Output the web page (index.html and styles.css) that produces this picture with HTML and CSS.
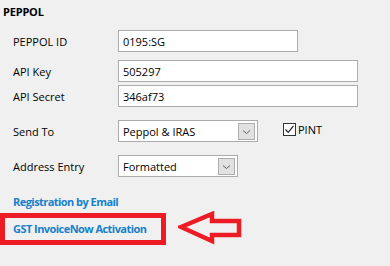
FILE: index.html
```html
<!DOCTYPE html>
<html lang="en">
<head>
    <meta charset="UTF-8">
    <title>PEPPOL Settings</title>
    <link rel="stylesheet" href="styles.css">
</head>
<body>
    <div class="panel">
        <h2 class="title">PEPPOL</h2>

        <div class="form">
            <div class="row row-id">
                <span class="label">PEPPOL ID</span>
                <div class="field field-short">0195:SG</div>
            </div>
            <div class="row row-key">
                <span class="label">API Key</span>
                <div class="field field-long">505297</div>
            </div>
            <div class="row row-secret">
                <span class="label">API Secret</span>
                <div class="field field-long">346af73</div>
            </div>

            <div class="row row-send">
                <span class="label">Send To</span>
                <div class="select select-send">
                    <span>Peppol &amp; IRAS</span>
                    <span class="drop">
                        <svg width="9" height="6" viewBox="0 0 9 6"><path d="M1 1.5 L4.5 4.5 L8 1.5" fill="none" stroke="#606060" stroke-width="1"/></svg>
                    </span>
                </div>
                <label class="check">
                    <span class="box">
                        <svg width="11" height="11" viewBox="0 0 11 11"><path d="M1.5 5.5 L4.2 8.3 L9.5 1.8" fill="none" stroke="#222" stroke-width="1.2"/></svg>
                    </span>
                    PINT
                </label>
            </div>
            <div class="row row-address">
                <span class="label">Address Entry</span>
                <div class="select select-address">
                    <span>Formatted</span>
                    <span class="drop">
                        <svg width="9" height="6" viewBox="0 0 9 6"><path d="M1 1.5 L4.5 4.5 L8 1.5" fill="none" stroke="#606060" stroke-width="1"/></svg>
                    </span>
                </div>
            </div>
        </div>

        <div class="links">
            <a class="link link-reg" href="#">Registration by Email</a>
            <div class="highlight">
                <a class="link" href="#">GST InvoiceNow Activation</a>
            </div>
        </div>

        <!-- annotation arrow pointing at the highlighted link -->
        <svg class="arrow" width="70" height="40" viewBox="0 0 70 40">
            <polygon points="3,16 34,3 34,10 61,10 61,24 34,24 34,30" fill="none" stroke="#ed1c24" stroke-width="4.5" stroke-linejoin="miter"/>
        </svg>
    </div>
</body>
</html>
```

FILE: styles.css
```css
body {
    margin: 0;
    background-color: #f0f0f0;
    font-family: "Open Sans", "Noto Sans", sans-serif;
    font-size: 11px;
    color: #000;
}

.panel {
    position: relative;
    width: 390px;
    height: 266px;
    padding-top: 4px;
    box-sizing: border-box;
}

.title {
    margin: 0 0 0 3px;
    font-size: 11px;
    font-weight: bold;
    line-height: 16px;
    letter-spacing: -0.2px;
}

.form {
    margin-top: 10px;
}

.row {
    display: flex;
    align-items: center;
}

.row-key {
    margin-top: 8px;
}

.row-secret {
    margin-top: 3px;
}

.row-send {
    margin-top: 13px;
}

.row-address {
    margin-top: 13px;
}

.label {
    width: 105px;
    padding-left: 13px;
    white-space: nowrap;
}

.field {
    height: 22px;
    box-sizing: border-box;
    border: 1px solid #ababab;
    background: #fff;
    padding-left: 4px;
    display: flex;
    align-items: center;
    white-space: nowrap;
}

.field-short {
    width: 180px;
}

.field-long {
    width: 240px;
}

.select {
    height: 22px;
    box-sizing: border-box;
    border: 1px solid #ababab;
    background: #fff;
    padding: 0 2px 0 4px;
    display: flex;
    align-items: center;
    justify-content: space-between;
    white-space: nowrap;
}

.select-send {
    width: 140px;
}

.select-address {
    width: 120px;
}

.drop {
    width: 17px;
    height: 17px;
    box-sizing: border-box;
    border: 1px solid #adadad;
    background: #e1e1e1;
    display: flex;
    align-items: center;
    justify-content: center;
    margin-top: 1px;
}

.check {
    display: flex;
    align-items: center;
    gap: 2px;
    margin-left: 25px;
    margin-top: -3px;
}

.box {
    width: 13px;
    height: 13px;
    box-sizing: border-box;
    border: 1px solid #333;
    background: #fff;
    display: flex;
    align-items: center;
    justify-content: center;
}

.links {
    margin-top: 17px;
}

.link {
    color: #1580cc;
    font-weight: bold;
    text-decoration: none;
    line-height: 16px;
    white-space: nowrap;
    letter-spacing: -0.55px;
}

.link-reg {
    display: block;
    margin-left: 13px;
}

.highlight {
    margin-top: 3px;
    width: 166px;
    height: 32px;
    box-sizing: border-box;
    border: 5px solid #ed1c24;
    padding-left: 8px;
    display: flex;
    align-items: center;
}

.arrow {
    position: absolute;
    left: 178px;
    top: 211px;
}
```
